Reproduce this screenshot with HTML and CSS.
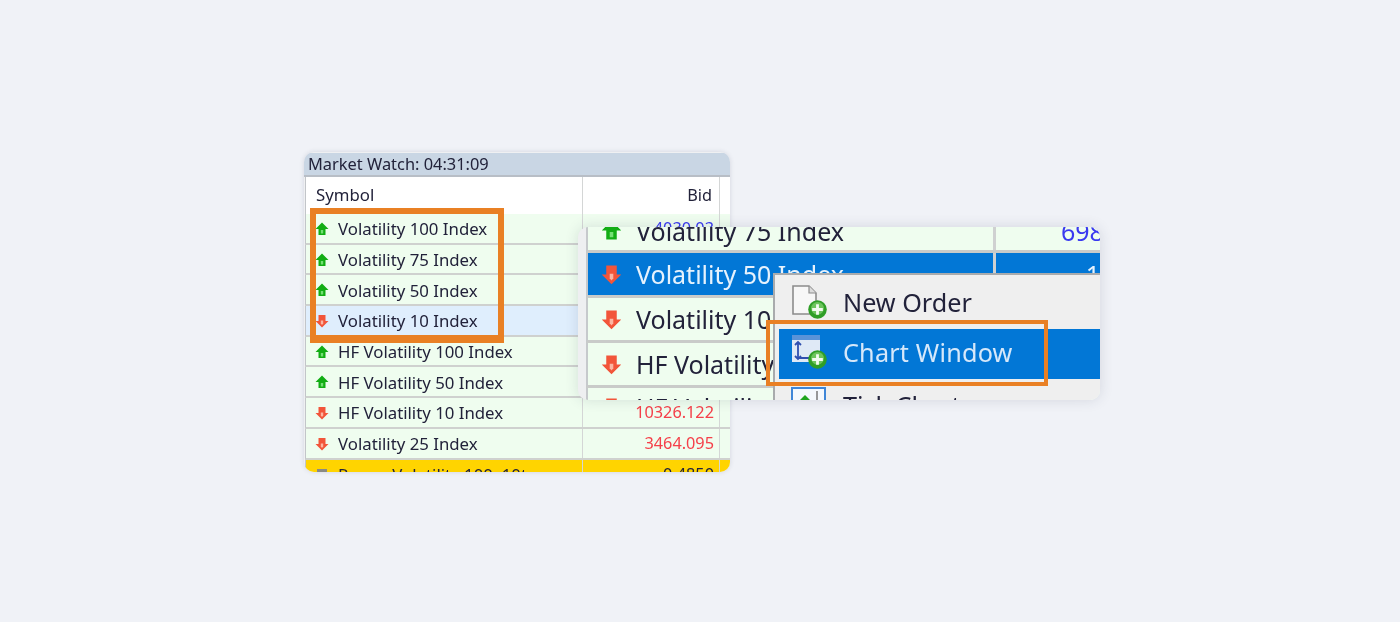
FILE: index.html
```html
<!DOCTYPE html>
<html lang="en">
<head>
    <meta charset="UTF-8">
    <meta name="viewport" content="width=device-width, initial-scale=1.0">
    <title>Market Watch</title>
    <link rel="stylesheet" href="styles.css">
</head>
<body>
    <svg class="defs" width="0" height="0">
        <defs>
            <symbol id="up" viewBox="0 0 14 14">
                <path d="M7 0.5 L13.5 7 L10.5 7 L10.5 13 L3.5 13 L3.5 7 L0.5 7 Z" fill="#12ad14"/>
                <path d="M5.8 8 L8.2 8 L8.2 11.5 L5.8 11.5 Z" fill="#74e074"/>
            </symbol>
            <symbol id="down" viewBox="0 0 14 14">
                <path d="M3.5 1 L10.5 1 L10.5 7 L13.5 7 L7 13.5 L0.5 7 L3.5 7 Z" fill="#f2553a"/>
                <path d="M5.8 6.5 L8.2 6.5 L8.2 9.5 L7 11 L5.8 9.5 Z" fill="#fcb5a2"/>
            </symbol>
            <symbol id="flat" viewBox="0 0 14 14">
                <path d="M2 2 L12 2 L12 9 L2 9 Z" fill="#8a8a84"/>
            </symbol>
            <symbol id="plus" viewBox="0 0 16 16">
                <circle cx="8" cy="8" r="7.8" fill="#2f9e27"/>
                <circle cx="8" cy="7" r="5.4" fill="#6cc45c"/>
                <path d="M8 3.5 V12.5 M3.5 8 H12.5" stroke="#f2fbf0" stroke-width="2.4"/>
            </symbol>
        </defs>
    </svg>

    <!-- small market watch window -->
    <div class="watch">
        <div class="watch-title">Market Watch: 04:31:09</div>
        <div class="watch-head">
            <div class="col-symbol">Symbol</div>
            <div class="col-bid">Bid</div>
            <div class="col-rest"></div>
        </div>
        <div class="row green">
            <div class="col-symbol"><svg class="arrow"><use href="#up"/></svg>Volatility 100 Index</div>
            <div class="col-bid blue">4030.03</div>
            <div class="col-rest"></div>
        </div>
        <div class="row green">
            <div class="col-symbol"><svg class="arrow"><use href="#up"/></svg>Volatility 75 Index</div>
            <div class="col-bid"></div>
            <div class="col-rest"></div>
        </div>
        <div class="row green">
            <div class="col-symbol"><svg class="arrow"><use href="#up"/></svg>Volatility 50 Index</div>
            <div class="col-bid"></div>
            <div class="col-rest"></div>
        </div>
        <div class="row picked">
            <div class="col-symbol"><svg class="arrow"><use href="#down"/></svg>Volatility 10 Index</div>
            <div class="col-bid"></div>
            <div class="col-rest"></div>
        </div>
        <div class="row green">
            <div class="col-symbol"><svg class="arrow"><use href="#up"/></svg>HF Volatility 100 Index</div>
            <div class="col-bid"></div>
            <div class="col-rest"></div>
        </div>
        <div class="row green">
            <div class="col-symbol"><svg class="arrow"><use href="#up"/></svg>HF Volatility 50 Index</div>
            <div class="col-bid"></div>
            <div class="col-rest"></div>
        </div>
        <div class="row green">
            <div class="col-symbol"><svg class="arrow"><use href="#down"/></svg>HF Volatility 10 Index</div>
            <div class="col-bid red">10326.122</div>
            <div class="col-rest"></div>
        </div>
        <div class="row green">
            <div class="col-symbol"><svg class="arrow"><use href="#down"/></svg>Volatility 25 Index</div>
            <div class="col-bid red">3464.095</div>
            <div class="col-rest"></div>
        </div>
        <div class="row yellow">
            <div class="col-symbol"><svg class="arrow"><use href="#flat"/></svg>Range Volatility 100, 10t</div>
            <div class="col-bid">0.4850</div>
            <div class="col-rest"></div>
        </div>
    </div>
    <div class="mark mark-list"></div>

    <!-- zoomed crop with the context menu -->
    <div class="zoom">
        <div class="zoom-row zoom-top green">
            <div class="zoom-symbol"><svg class="zoom-arrow"><use href="#up"/></svg>Volatility 75 Index</div>
            <div class="zoom-bid blue">6980.12</div>
        </div>
        <div class="zoom-row selected">
            <div class="zoom-symbol"><svg class="zoom-arrow"><use href="#down"/></svg>Volatility 50 Index</div>
            <div class="zoom-bid zoom-bid-end">1</div>
        </div>
        <div class="zoom-row green">
            <div class="zoom-symbol"><svg class="zoom-arrow"><use href="#down"/></svg>Volatility 10 Index</div>
            <div class="zoom-bid"></div>
        </div>
        <div class="zoom-row green">
            <div class="zoom-symbol"><svg class="zoom-arrow"><use href="#down"/></svg>HF Volatility 10 Index</div>
            <div class="zoom-bid"></div>
        </div>
        <div class="zoom-row zoom-last green">
            <div class="zoom-symbol"><svg class="zoom-arrow"><use href="#down"/></svg>HF Volatility</div>
            <div class="zoom-bid"></div>
        </div>

        <div class="menu">
            <div class="menu-item">
                <span class="menu-icon">
                    <svg width="38" height="36" viewBox="0 0 38 36">
                        <path d="M2 2 H18 L25 9 V30 H2 Z" fill="#f7f7f7" stroke="#8c8c8c" stroke-width="1.6"/>
                        <path d="M18 2 V9 H25" fill="#dcdcdc" stroke="#8c8c8c" stroke-width="1.2"/>
                        <use href="#plus" x="17" y="16" width="19" height="19"/>
                    </svg>
                </span>
                New Order
            </div>
            <div class="menu-item active">
                <span class="menu-icon">
                    <svg width="38" height="36" viewBox="0 0 38 36">
                        <rect x="1" y="1" width="28" height="27" fill="#dfe9f6"/>
                        <rect x="1" y="1" width="28" height="5" fill="#5a93d8"/>
                        <path d="M7 9 V24 M4 11 L7 8 L10 11 M4 22 L7 25 L10 22 M7 24 H20" fill="none" stroke="#2f4fb0" stroke-width="1.8"/>
                        <use href="#plus" x="17" y="16" width="19" height="19"/>
                    </svg>
                </span>
                Chart Window
            </div>
            <div class="menu-item tick">
                <span class="menu-icon">
                    <svg width="38" height="36" viewBox="0 0 38 36">
                        <rect x="1" y="1" width="33" height="30" fill="#f4f8fd" stroke="#3f86d8" stroke-width="2"/>
                        <path d="M14 8 L20 14 L8 14 Z" fill="#1fa51f"/>
                        <path d="M26 4 V14" stroke="#777" stroke-width="1.5"/>
                    </svg>
                </span>
                Tick Chart
            </div>
        </div>
    </div>
    <div class="mark mark-menu"></div>
</body>
</html>
```

FILE: styles.css
```css
html, body {
    margin: 0;
    height: 622px;
    overflow: hidden;
}
body {
    position: relative;
    background-color: #f0f2f7;
    font-family: "Noto Sans", "Open Sans", sans-serif;
    color: #22223a;
}
.defs {
    position: absolute;
}

/* market watch */
.watch {
    position: absolute;
    left: 304px;
    top: 152px;
    width: 426px;
    height: 320px;
    box-sizing: border-box;
    overflow: hidden;
    border-radius: 10px;
    background-color: #eff0f2;
    box-shadow: 0 0 5px rgba(40, 50, 80, 0.14);
    padding-top: 1px;
    filter: blur(0.4px);
}
.watch-title {
    height: 22px;
    line-height: 21px;
    padding-left: 4px;
    background-color: #c9d6e4;
    border-bottom: 2px solid #b8bec6;
    font-size: 16.4px;
    white-space: nowrap;
}
.watch-head, .row {
    display: flex;
    margin-left: 1px;
    border-left: 1px solid #c2c5c9;
}
.watch-head {
    height: 37px;
    line-height: 36px;
    background-color: #fff;
    font-size: 16.8px;
}
.watch-head .col-symbol {
    padding: 0 0 1px 10px;
}
.watch-head .col-bid {
    padding-right: 7px;
}
.row {
    height: 28.7px;
    line-height: 29px;
    border-bottom: 2px solid #cfd1cf;
    font-size: 16.8px;
}
.col-symbol {
    display: flex;
    align-items: center;
    width: 277px;
    box-sizing: border-box;
    padding: 1px 0 0 9px;
    border-right: 1px solid #d4d6d6;
    white-space: nowrap;
}
.col-bid {
    width: 137px;
    box-sizing: border-box;
    padding-right: 5px;
    font-size: 16.3px;
    text-align: right;
    border-right: 1px solid #d4d6d6;
}
.col-rest {
    flex: 1;
}
.arrow {
    width: 14px;
    height: 14px;
    margin-right: 9px;
    flex: none;
}
.green {
    background-color: #effdef;
}
.picked {
    background-color: #dfeefd;
}
.yellow {
    background-color: #ffd400;
    border-bottom: none;
}
.blue {
    color: #3a3af0;
}
.red {
    color: #f5404a;
}

/* zoomed crop */
.zoom {
    position: absolute;
    left: 578px;
    top: 227px;
    width: 522px;
    height: 173px;
    overflow: hidden;
    border-radius: 10px;
    background-color: #eeeff1;
    box-shadow: 0 0 14px rgba(40, 50, 80, 0.14);
    filter: blur(0.4px);
}
.zoom-row {
    display: flex;
    height: 42px;
    line-height: 42px;
    margin-left: 8px;
    border-left: 2px solid #c6c9cc;
    border-bottom: 3px solid #c9cbc9;
    font-size: 25px;
}
.zoom-top {
    height: 23px;
    line-height: 9px;
}
.zoom-symbol {
    display: flex;
    align-items: center;
    width: 408px;
    flex: none;
    padding-left: 13px;
    box-sizing: border-box;
    border-right: 3px solid #cfd1d1;
    white-space: nowrap;
}
.zoom-top .zoom-symbol {
    align-items: flex-start;
}
.zoom-last .zoom-symbol {
    padding-bottom: 4px;
}
.zoom-arrow {
    width: 21px;
    height: 21px;
    margin-right: 14px;
    flex: none;
}
.zoom-top .zoom-arrow {
    margin-top: -7px;
}
.zoom-bid {
    flex: 1;
    padding-left: 65px;
    white-space: nowrap;
    overflow: hidden;
}
.zoom-bid-end {
    padding-left: 0;
    text-align: right;
}
.selected {
    background-color: #0277d6;
    color: #e6f2fd;
}

/* context menu */
.menu {
    position: absolute;
    left: 195px;
    top: 46px;
    width: 327px;
    height: 127px;
    box-sizing: border-box;
    padding: 4px 0 0 4px;
    background-color: #efefef;
    border-top: 2px solid #a9abad;
    border-left: 2px solid #a9abad;
    font-size: 25.2px;
    overflow: hidden;
}
.menu-item {
    display: flex;
    align-items: center;
    height: 50px;
    box-sizing: border-box;
    padding-bottom: 4px;
    white-space: nowrap;
}
.tick {
    margin-top: 3px;
}
.menu-icon {
    display: flex;
    width: 64px;
    flex: none;
    padding-left: 12px;
    box-sizing: border-box;
}
.active {
    background-color: #0277d6;
    color: #d6e8fa;
    letter-spacing: 0.2px;
}

/* orange highlights */
.mark {
    position: absolute;
    box-sizing: border-box;
    border-style: solid;
    border-color: #e98024;
}
.mark-list {
    left: 310px;
    top: 208px;
    width: 194px;
    height: 135px;
    border-width: 6px 6px 8px 6px;
}
.mark-menu {
    left: 766px;
    top: 320px;
    width: 282px;
    height: 66px;
    border-width: 4px;
}
```
